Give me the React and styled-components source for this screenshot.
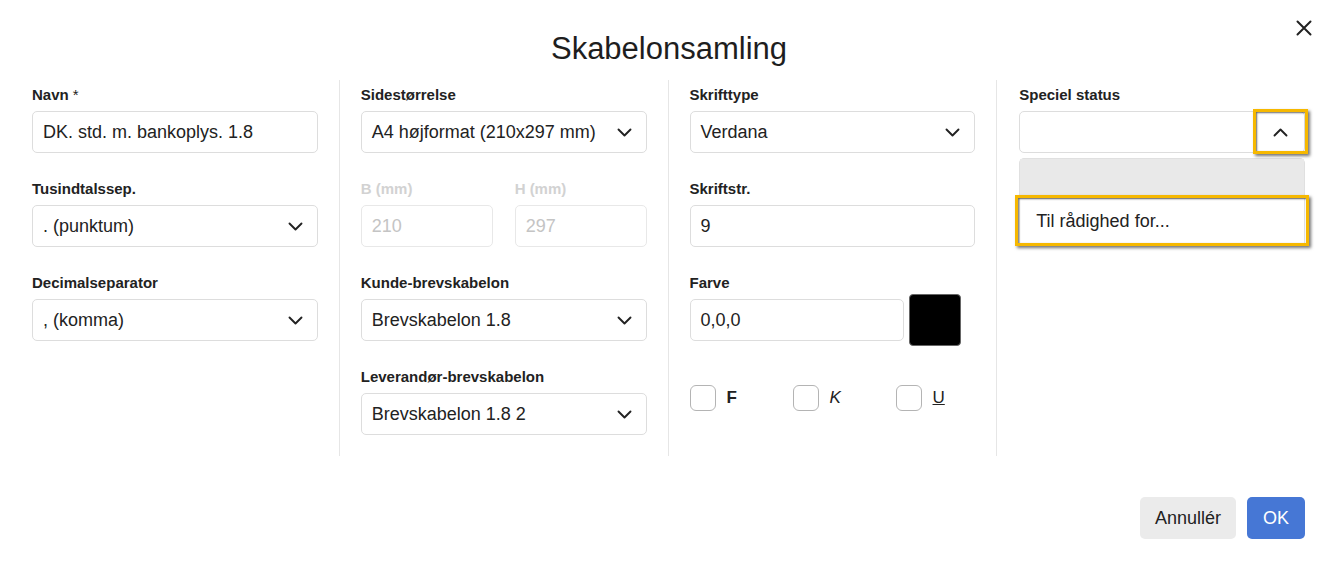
import styled, { createGlobalStyle } from "styled-components";

const GlobalStyle = createGlobalStyle`
  * {
    box-sizing: border-box;
  }

  body {
    margin: 0;
    background: #ffffff;
    font-family: "Liberation Sans", Arial, sans-serif;
    color: #222222;
  }
`;

function Chevron({ up }) {
  return (
    <svg width="15" height="9" viewBox="0 0 15 9" fill="none">
      <path
        d={up ? "M1.5 7.5 L7.5 1.5 L13.5 7.5" : "M1.5 1.5 L7.5 7.5 L13.5 1.5"}
        stroke="#222"
        strokeWidth="1.9"
        strokeLinecap="round"
        strokeLinejoin="round"
      />
    </svg>
  );
}

function CloseIcon() {
  return (
    <svg width="16" height="16" viewBox="0 0 16 16" fill="none">
      <path
        d="M1.5 1.5 L14.5 14.5 M14.5 1.5 L1.5 14.5"
        stroke="#222"
        strokeWidth="2"
        strokeLinecap="round"
      />
    </svg>
  );
}

function SelectField({ label, value }) {
  return (
    <Field>
      <Label>{label}</Label>
      <SelectBox>
        <span>{value}</span>
        <Chevron />
      </SelectBox>
    </Field>
  );
}

function TextField({ label, value, required }) {
  return (
    <Field>
      <Label>
        {label}
        {required && <Star> *</Star>}
      </Label>
      <Input>{value}</Input>
    </Field>
  );
}

function App() {
  return (
    <>
      <GlobalStyle />
      <Dialog>
        <Header>
          <span />
          <Title>Skabelonsamling</Title>
          <CloseButton aria-label="Luk">
            <CloseIcon />
          </CloseButton>
        </Header>

        <Columns>
          <Column>
            <TextField label="Navn" value="DK. std. m. bankoplys. 1.8" required />
            <SelectField label="Tusindtalssep." value=". (punktum)" />
            <SelectField label="Decimalseparator" value=", (komma)" />
          </Column>

          <Column>
            <SelectField label="Sidestørrelse" value="A4 højformat (210x297 mm)" />
            <Pair>
              <div>
                <Label disabled>B (mm)</Label>
                <Input disabled>210</Input>
              </div>
              <div>
                <Label disabled>H (mm)</Label>
                <Input disabled>297</Input>
              </div>
            </Pair>
            <SelectField label="Kunde-brevskabelon" value="Brevskabelon 1.8" />
            <SelectField
              label="Leverandør-brevskabelon"
              value="Brevskabelon 1.8 2"
            />
          </Column>

          <Column>
            <SelectField label="Skrifttype" value="Verdana" />
            <TextField label="Skriftstr." value="9" />
            <Field>
              <Label>Farve</Label>
              <ColorRow>
                <ColorInput>0,0,0</ColorInput>
                <Swatch color="#000000" />
              </ColorRow>
            </Field>
            <StyleRow>
              <CheckItem>
                <Checkbox />
                <CheckLabel bold>F</CheckLabel>
              </CheckItem>
              <CheckItem>
                <Checkbox />
                <CheckLabel italic>K</CheckLabel>
              </CheckItem>
              <CheckItem>
                <Checkbox />
                <CheckLabel underline>U</CheckLabel>
              </CheckItem>
            </StyleRow>
          </Column>

          <Column>
            <Field>
              <Label>Speciel status</Label>
              <ComboBox>
                <ComboValue />
                <ToggleButton>
                  <Chevron up />
                </ToggleButton>
              </ComboBox>
              <Menu>
                <MenuOption selected />
                <MenuOption highlighted>Til rådighed for...</MenuOption>
              </Menu>
            </Field>
          </Column>
        </Columns>

        <Footer>
          <Button>Annullér</Button>
          <Button primary>OK</Button>
        </Footer>
      </Dialog>
    </>
  );
}

const Dialog = styled.div`
  width: 1331px;
  height: 564px;
  background: #ffffff;
`;

const Header = styled.div`
  display: grid;
  grid-template-columns: 1fr auto 1fr;
  padding: 0 19px 0 26px;
  height: 80px;
`;

const Title = styled.h1`
  margin: 31px 0 0;
  font-size: 31px;
  line-height: 36px;
  font-weight: 400;
  color: #1e1e1e;
`;

const CloseButton = styled.button`
  justify-self: end;
  align-self: start;
  margin-top: 20px;
  padding: 0;
  border: none;
  background: none;
  width: 16px;
  height: 16px;
  display: flex;
`;

const Columns = styled.div`
  display: flex;
  padding: 0 26px 0 32px;
`;

const Column = styled.div`
  box-sizing: content-box;
  flex: 1 1 0;
  min-width: 0;
  padding: 6px 21px 21px;
  border-left: 1px solid #e6e6e6;

  &:first-child {
    padding-left: 0;
    border-left: none;
  }

  &:last-child {
    padding-right: 0;
    padding-left: 22px;
  }
`;

const Field = styled.div`
  margin-bottom: 27px;
  min-width: 0;

  &:last-child {
    margin-bottom: 0;
  }
`;

const Label = styled.div`
  font-size: 15px;
  line-height: 18px;
  font-weight: 700;
  color: ${(p) => (p.disabled ? "#d2d2d2" : "#222222")};
  margin-bottom: 7px;
  white-space: nowrap;
`;

const Star = styled.span`
  font-weight: 400;
`;

const Input = styled.div`
  height: 42px;
  display: flex;
  align-items: center;
  padding: 0 10px;
  border: 1px solid ${(p) => (p.disabled ? "#e8e8e8" : "#dddddd")};
  border-radius: 5px;
  font-size: 18px;
  color: ${(p) => (p.disabled ? "#c4c4c4" : "#222222")};
  background: #ffffff;
  white-space: nowrap;
`;

const SelectBox = styled(Input)`
  justify-content: space-between;
  padding-right: 14px;
`;

const Pair = styled.div`
  display: grid;
  grid-template-columns: 1fr 1fr;
  gap: 22px;
  margin-bottom: 27px;
`;

const ColorRow = styled.div`
  display: flex;
  align-items: center;
`;

const ColorInput = styled(Input)`
  width: 75%;
`;

const Swatch = styled.div`
  width: 52px;
  height: 52px;
  margin: -5px 0 -5px 5px;
  border-radius: 4px;
  border: 1px solid #666666;
  background: ${(p) => p.color};
`;

const StyleRow = styled.div`
  display: flex;
  margin-top: 44px;
`;

const CheckItem = styled.label`
  display: flex;
  align-items: center;
  flex-shrink: 0;
  width: 103px;

  &:last-child {
    width: auto;
  }
`;

const Checkbox = styled.span`
  width: 26px;
  height: 26px;
  border: 1px solid #b4b4b4;
  border-radius: 6px;
  background: #ffffff;
`;

const CheckLabel = styled.span`
  margin-left: 11px;
  font-size: 17px;
  color: #222222;
  font-weight: ${(p) => (p.bold ? 700 : 400)};
  font-style: ${(p) => (p.italic ? "italic" : "normal")};
  text-decoration: ${(p) => (p.underline ? "underline" : "none")};
`;

const highlight = `
  &::after {
    content: "";
    position: absolute;
    border: 3px solid #f6b800;
    box-shadow: 2px 2px 3px rgba(0, 0, 0, 0.55),
      inset 1px 1px 2px rgba(0, 0, 0, 0.6);
    pointer-events: none;
  }
`;

const ComboBox = styled.div`
  height: 42px;
  display: flex;
  border: 1px solid #dddddd;
  border-radius: 5px;
  background: #ffffff;
`;

const ComboValue = styled.div`
  flex: 1;
`;

const ToggleButton = styled.button`
  position: relative;
  width: 48px;
  padding: 0;
  border: none;
  background: none;
  display: flex;
  align-items: center;
  justify-content: center;
  ${highlight}

  &::after {
    inset: -3px -4px -2px -3px;
  }
`;

const Menu = styled.div`
  margin-top: 5px;
  border: 1px solid #e0e0e0;
  border-radius: 5px 5px 0 0;
  background: #e9e9e9;
`;

const MenuOption = styled.div`
  position: relative;
  height: ${(p) => (p.selected ? "40px" : "44px")};
  display: flex;
  align-items: center;
  padding: 0 16px;
  font-size: 18px;
  color: #222222;
  background: ${(p) => (p.selected ? "#e9e9e9" : "#ffffff")};
  ${(p) => (p.highlighted ? highlight : "")}

  &::after {
    inset: -4px -5px -3px -5px;
  }
`;

const Footer = styled.div`
  display: flex;
  justify-content: flex-end;
  gap: 11px;
  margin-top: 41px;
  padding-right: 26px;
`;

const Button = styled.button`
  height: 42px;
  padding: 0 15px;
  min-width: 58px;
  border: none;
  border-radius: 5px;
  font-family: "Liberation Sans", Arial, sans-serif;
  font-size: 18px;
  color: ${(p) => (p.primary ? "#ffffff" : "#222222")};
  background: ${(p) => (p.primary ? "#4677d5" : "#ebebeb")};
`;

export default App;
